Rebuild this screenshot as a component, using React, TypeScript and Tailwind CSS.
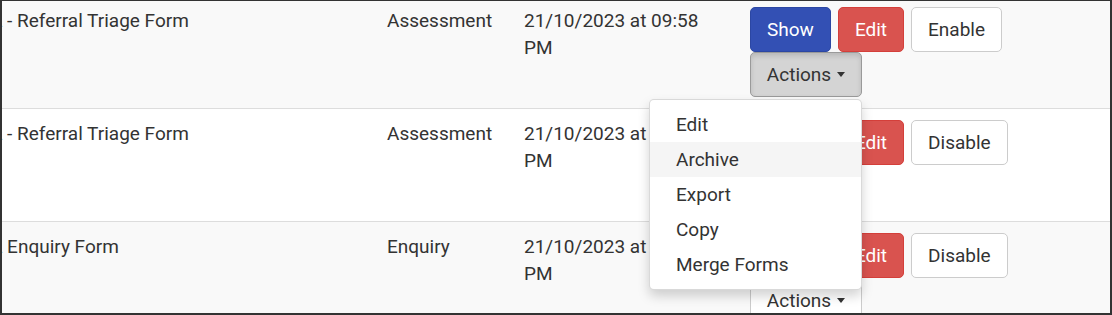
import { useState } from "react";

type Row = {
  name: string;
  type: string;
  date: string;
  toggle: "Enable" | "Disable";
  striped: boolean;
};

const rows: Row[] = [
  { name: "A - Referral Triage Form", type: "Assessment", date: "21/10/2023 at 09:58 PM", toggle: "Enable", striped: true },
  { name: "A - Referral Triage Form", type: "Assessment", date: "21/10/2023 at 09:58 PM", toggle: "Disable", striped: false },
  { name: "A Enquiry Form", type: "Enquiry", date: "21/10/2023 at 09:58 PM", toggle: "Disable", striped: true },
];

const menuItems = ["Edit", "Archive", "Export", "Copy", "Merge Forms"];

const btn =
  "inline-flex h-[45px] items-center justify-center whitespace-nowrap rounded-[5px] border px-4 text-[19px] leading-[27px]";

const Caret = () => (
  <span className="ml-[6px] inline-block h-0 w-0 border-x-[4px] border-t-[5px] border-x-transparent border-t-[#333]" />
);

const ActionsMenu = ({ open }: { open: boolean }) => (
  <div className="relative w-fit">
    <button
      className={`${btn} w-[112px] ${
        open
          ? "border-[#9a9a9a] bg-[#d4d4d4] shadow-[inset_0_3px_5px_rgba(0,0,0,0.125)]"
          : "border-[#ccc] bg-white"
      } text-[#333]`}
    >
      Actions
      <Caret />
    </button>

    {open && (
      <ul className="absolute right-0 top-[calc(100%+2px)] z-10 w-[213px] rounded-[5px] border border-black/15 bg-white py-[7px] shadow-[0_6px_12px_rgba(0,0,0,0.175)]">
        {menuItems.map((item) => (
          <li
            key={item}
            className={`whitespace-nowrap px-[26px] py-[4px] text-[19px] leading-[27px] text-[#333] ${
              item === "Archive" ? "bg-[#f5f5f5]" : ""
            }`}
          >
            {item}
          </li>
        ))}
      </ul>
    )}
  </div>
);

export default function App() {
  const [openRow] = useState(0);

  return (
    <div className="h-[315px] w-[1112px] overflow-hidden border-b-2 border-l-2 border-r-2 border-t border-[#333] bg-white font-[family-name:Roboto,sans-serif] text-[#333]">
      <div className="mt-[-6px]">
        {rows.map((row, i) => (
          <div
            key={i}
            className={`flex border-t border-[#ddd] text-[19px] leading-[27px] ${
              row.striped ? "bg-[#f9f9f9]" : "bg-white"
            }`}
          >
            {/* name column is cut off on the left */}
            <div className="ml-[-23px] w-[397px] shrink-0 whitespace-nowrap px-[11px] py-[11px]">{row.name}</div>
            <div className="w-[137px] shrink-0 px-[11px] py-[11px]">{row.type}</div>
            <div className="w-[226px] shrink-0 py-[11px] pl-[11px] pr-[30px]">{row.date}</div>
            <div className="flex flex-1 flex-col px-[11px] py-[11px]">
              <div className="flex gap-[7px]">
                <button className={`${btn} border-[#2c47a3] bg-[#3350b4] text-white`}>Show</button>
                <button className={`${btn} border-[#d43f3a] bg-[#d9534f] text-white`}>Edit</button>
                <button className={`${btn} border-[#ccc] bg-white text-[#333]`}>{row.toggle}</button>
              </div>
              <ActionsMenu open={openRow === i} />
            </div>
          </div>
        ))}
      </div>
    </div>
  );
}
